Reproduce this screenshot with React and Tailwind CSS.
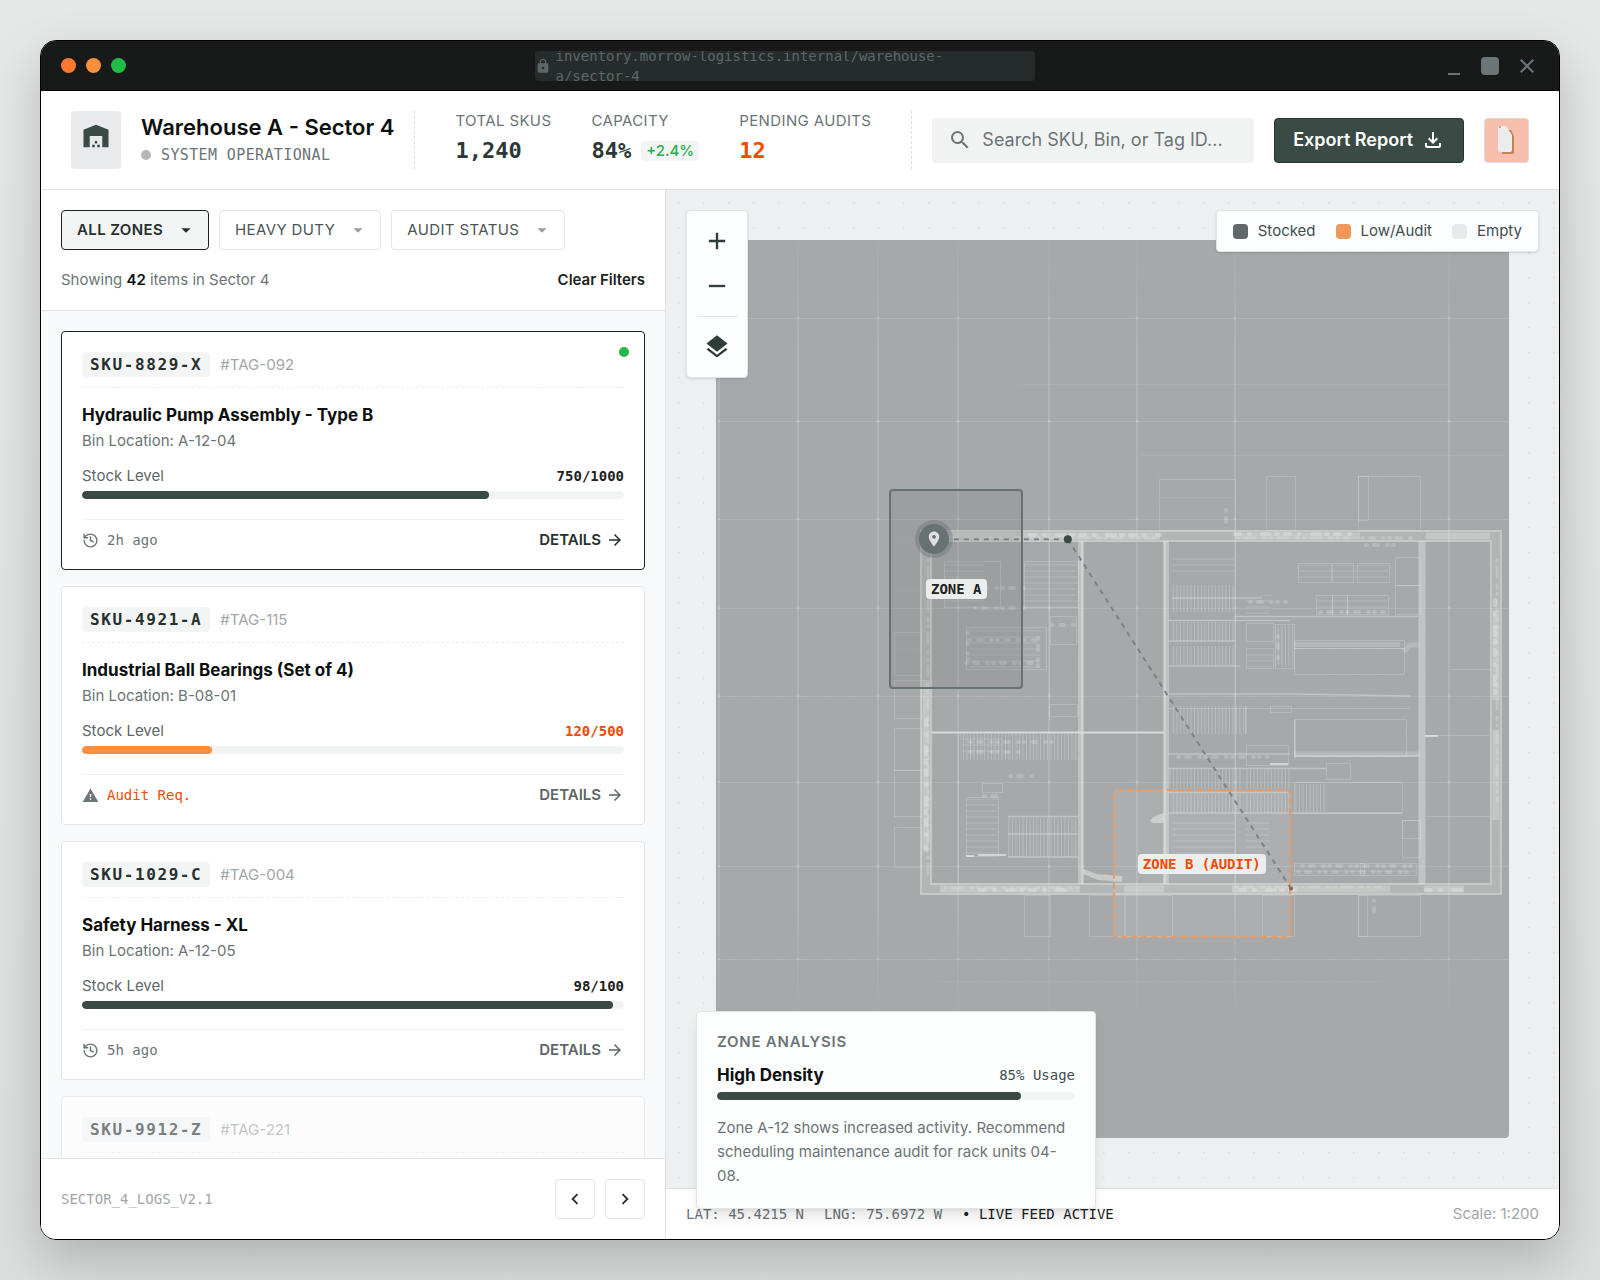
import { useState } from 'react';
import { History } from 'lucide-react';
import {
  MdAdd,
  MdArrowDropDown,
  MdArrowForward,
  MdChevronLeft,
  MdChevronRight,
  MdClose,
  MdLayers,
  MdLocationOn,
  MdLock,
  MdOutlineFileDownload,
  MdRemove,
  MdSearch,
  MdWarehouse,
  MdWarning,
} from 'react-icons/md';

const ITEMS = [
  { sku: 'SKU-8829-X', tag: '#TAG-092', name: 'Hydraulic Pump Assembly - Type B', bin: 'A-12-04', stock: 750, max: 1000, note: '2h ago', selected: true },
  { sku: 'SKU-4921-A', tag: '#TAG-115', name: 'Industrial Ball Bearings (Set of 4)', bin: 'B-08-01', stock: 120, max: 500, note: 'Audit Req.', audit: true },
  { sku: 'SKU-1029-C', tag: '#TAG-004', name: 'Safety Harness - XL', bin: 'A-12-05', stock: 98, max: 100, note: '5h ago' },
  { sku: 'SKU-9912-Z', tag: '#TAG-221', faded: true },
];

const FILTERS = [
  { id: 'zone', label: 'All Zones', active: true },
  { id: 'type', label: 'Heavy Duty' },
  { id: 'audit', label: 'Audit Status' },
];

const LEGEND = [
  { label: 'Stocked', swatch: 'bg-[#5f696c]' },
  { label: 'Low/Audit', swatch: 'bg-[#f0985a]' },
  { label: 'Empty', swatch: 'bg-[#e8e9ea]' },
];

// floor plan geometry, [x, y, width, height]
const DOCKS = [
  [1159, 479, 76, 51], [1266, 476, 29, 54], [1358, 476, 62, 54], [1358, 476, 10, 44],
  [894, 632, 27, 43], [894, 680, 27, 38], [894, 728, 27, 42], [894, 770, 27, 46], [894, 827, 27, 40],
  [1024, 895, 26, 41], [1089, 895, 36, 41], [1124, 895, 48, 41], [1262, 895, 32, 41], [1358, 895, 62, 41], [1358, 895, 9, 41],
];

const ROOMS = [
  [1298, 563, 33, 19], [1332, 563, 21, 19], [1357, 563, 32, 19], [1316, 595, 16, 19], [1332, 595, 15, 19],
  [1347, 595, 41, 19], [1395, 557, 25, 28], [1395, 585, 25, 29], [1246, 623, 27, 18], [1246, 648, 27, 20],
  [1275, 624, 19, 44], [1294, 640, 110, 8], [1294, 648, 110, 26], [1294, 719, 112, 37], [1294, 782, 108, 31],
  [1402, 820, 18, 37], [1402, 820, 18, 18], [1294, 863, 70, 12], [1360, 863, 56, 12], [1246, 745, 42, 20],
  [1326, 763, 24, 16], [1270, 706, 21, 6], [1049, 704, 28, 12], [982, 783, 20, 9], [966, 797, 32, 59],
  [944, 561, 56, 46], [1024, 561, 54, 46], [966, 627, 80, 42], [1050, 616, 26, 28],
];

const RACKS = [
  [1172, 585, 62, 27], [1172, 622, 62, 19], [1172, 646, 62, 19], [1172, 706, 74, 28], [1168, 769, 74, 20],
  [1246, 769, 44, 20], [1172, 794, 70, 19], [1246, 794, 44, 19], [1294, 784, 31, 28], [1008, 818, 70, 16],
  [1008, 835, 70, 22], [960, 734, 118, 26], [1275, 626, 18, 40],
];

const SHELVES = [
  [1172, 555, 62, 20], [1247, 650, 26, 17], [1172, 818, 62, 56], [1246, 818, 24, 34], [966, 799, 32, 56],
  [944, 563, 40, 44], [1024, 561, 54, 50], [970, 630, 70, 38], [962, 734, 40, 20], [1298, 565, 90, 16],
  [1316, 597, 72, 16], [1246, 595, 24, 20], [1294, 865, 122, 10],
];

const GRID_X = [719, 798, 878, 958, 1049, 1137, 1235, 1449];
const GRID_Y = [318, 421, 519, 608, 696, 782, 866, 959];

function FloorPlan() {
  return (
    <svg
      viewBox="716 240 793 898"
      preserveAspectRatio="none"
      className="block h-full w-full rounded bg-[#a7a8aa]"
      aria-hidden="true"
    >
      <defs>
        <pattern id="rack" width="7" height="8" patternUnits="userSpaceOnUse">
          <path d="M1 0v8M4.5 0v8" stroke="#fff" strokeOpacity=".22" />
        </pattern>
        <pattern id="shelf" width="8" height="6" patternUnits="userSpaceOnUse">
          <path d="M0 1h8" stroke="#fff" strokeOpacity=".16" />
        </pattern>
        <linearGradient id="fade" x1="0" y1="0" x2="0" y2="1">
          <stop offset="0" stopColor="#fff" stopOpacity=".02" />
          <stop offset=".15" stopColor="#fff" stopOpacity=".13" />
          <stop offset=".85" stopColor="#fff" stopOpacity=".13" />
          <stop offset="1" stopColor="#fff" stopOpacity="0" />
        </linearGradient>
      </defs>

      {GRID_X.map((x) => (
        <rect key={x} x={x - 1} y="240" width="2" height="780" fill="url(#fade)" />
      ))}
      <g stroke="#fff" strokeOpacity=".12">
        {GRID_Y.map((y) => (
          <path key={y} d={`M718 ${y}.5H1509`} />
        ))}
        <path
          d="M1020 384.5H1449M1140 455.5H1505M1159 497.5H1235M893 539.5h28M893 590.5h28M894 649.5h27M940 981.5H1380"
          strokeOpacity=".07"
        />
      </g>
      <g fill="#fff" fillOpacity=".14">
        {GRID_X.map((x) => GRID_Y.map((y) => <circle key={`${x}-${y}`} cx={x} cy={y} r="1.5" />))}
      </g>

      <g fill="none" stroke="#fff" strokeOpacity=".16">
        {DOCKS.map(([x, y, w, h], i) => (
          <rect key={i} x={x + 0.5} y={y + 0.5} width={w} height={h} />
        ))}
      </g>
      {RACKS.map(([x, y, w, h], i) => (
        <rect key={i} x={x} y={y} width={w} height={h} fill="url(#rack)" />
      ))}
      {SHELVES.map(([x, y, w, h], i) => (
        <rect key={i} x={x} y={y} width={w} height={h} fill="url(#shelf)" />
      ))}
      <g fill="none" stroke="#fff" strokeOpacity=".18">
        {ROOMS.map(([x, y, w, h], i) => (
          <rect key={i} x={x + 0.5} y={y + 0.5} width={w} height={h} />
        ))}
        <path d="M1235.5 541V884M1449.5 669.5H1490M1425 735.5h65M1425 816.5h65M1168 708.5H1410M958.5 734V884M1049.5 541V720" />
      </g>
      <g fill="none" stroke="#fff" strokeOpacity=".3" strokeWidth="1.5">
        <path d="M1168 620.5H1290M1168 641H1235M1168 666H1240M1235 616.5H1418M1168 694H1294l116 2M1168 754H1290M1168 768.5H1326M1168 792.5H1290M1168 813H1402M1294 756H1420M1172 598h90M1008 834h70M1008 816.5h70M1008 857h70M1295 720v38M1246 706v28" />
      </g>
      <path d="M1294 644.5H1400M1294 754H1420M1404 652l6-7h10" fill="none" stroke="#fff" strokeOpacity=".18" strokeWidth="5" />
      {/* loose equipment */}
      <g stroke="#fff" strokeOpacity=".18" strokeWidth="4" strokeLinecap="round" strokeDasharray="1 7 4 9 1 5">
        <path d="M970 640h70M966 663h72M975 608h54M1038 638v28M1052 625h24M970 742h84M970 752h50M1010 776h26M984 796h20M975 588h50M1178 757h90M1298 872h116M1302 866h110M1362 538h52M1366 545h30M1250 602h36M1320 612h64M1278 636v26M1226 510v18M1374 900v12M968 632v32" />
      </g>
      <path d="M966 856h8M978 855h28M1270 764h18M1425 736h13" stroke="#fff" strokeOpacity=".5" strokeWidth="2" />

      {/* outer walls */}
      <g fill="none" stroke="#e3e6e4">
        <rect x="926" y="536" width="570" height="353" strokeOpacity=".22" strokeWidth="12" />
        <rect x="921" y="531" width="580" height="363" strokeOpacity=".4" strokeWidth="2" />
        <rect x="931" y="541" width="560" height="343" strokeOpacity=".4" strokeWidth="2" />
        <path
          d="M940 536H1160M1235 536H1360M1426 536H1490M926 680V850M1496 610V700M1496 730V820M940 889H1080M1124 889H1164M1232 889H1390M1424 889H1464"
          strokeOpacity=".36"
          strokeWidth="7"
        />
        <path
          d="M1030 535H1160M1235 534H1350M926 720V850M1495 600V700M980 890H1070M1240 890H1300M1426 890h36"
          strokeOpacity=".42"
          strokeWidth="4"
          strokeLinecap="round"
          strokeDasharray="5 9 1 12 8 6 2 7"
        />
        <path
          d="M940 538H1158M1238 538H1350M928 560V880M1497 560V800M945 888H1080M1236 887H1380"
          strokeOpacity=".26"
          strokeWidth="3"
          strokeLinecap="round"
          strokeDasharray="1 6 10 8 3 5"
        />
      </g>
      {/* partitions */}
      <g fill="none" stroke="#e3e6e4">
        <path d="M1081 541V884M1166 541V884" strokeOpacity=".42" strokeWidth="6" />
        <path d="M1082 541V884M1165 541V884" strokeOpacity=".45" strokeWidth="2" />
        <path d="M1422 541V884" strokeOpacity=".45" strokeWidth="7" />
        <path d="M932 732.5H1164" strokeOpacity=".8" strokeWidth="2" />
      </g>
      <g fill="#e3e6e4" fillOpacity=".55">
        <path d="M1083 869l14 5 25 2v6l-24-2-15-6zM1150 820l7-5 7-2v10h-12z" />
      </g>
    </svg>
  );
}

function TitleBar() {
  return (
    <div className="flex h-[50px] shrink-0 items-center justify-between border-b border-black bg-[#181a19] px-5">
      <div className="flex gap-[10px]">
        <span className="h-[15px] w-[15px] rounded-full bg-[#ff7a2c]" />
        <span className="h-[15px] w-[15px] rounded-full bg-[#fc8f3c]" />
        <span className="h-[15px] w-[15px] rounded-full bg-[#21bb48]" />
      </div>
      <div className="flex h-[30px] w-[500px] items-center gap-[5px] overflow-hidden rounded bg-[#262c2c] font-['DejaVu_Sans_Mono',monospace] text-[14px] leading-5 text-[#5d6769]">
        <MdLock className="shrink-0" size={16} />
        <span className="w-[430px] break-words">inventory.morrow-logistics.internal/warehouse-a/sector-4</span>
      </div>
      <div className="flex items-center gap-4 text-[#6b7577]">
        <button type="button" aria-label="Minimize" className="flex h-[18px] w-[22px] items-end justify-center">
          <span className="h-[2px] w-3 bg-current" />
        </button>
        <button type="button" aria-label="Maximize" className="h-[18px] w-[18px] rounded-sm bg-current" />
        <button type="button" aria-label="Close">
          <MdClose size={24} />
        </button>
      </div>
    </div>
  );
}

function Stat({ label, children }) {
  return (
    <div className="flex flex-col justify-between whitespace-nowrap">
      <span className="text-[15px] leading-5 tracking-wide text-[#6b7476] uppercase">{label}</span>
      <div className="flex items-center gap-[10px] font-['DejaVu_Sans_Mono',monospace] text-[22px] leading-9 font-bold text-[#2c3835]">
        {children}
      </div>
    </div>
  );
}

function Header() {
  return (
    <header className="flex shrink-0 items-stretch border-b border-[#dfe1e2] bg-white px-[30px] py-5">
      <div className="flex items-stretch gap-5 border-r border-dashed border-[#dcdedf] pr-5">
        <div className="flex w-[50px] justify-center rounded bg-[#e9eaec] pt-[10px] text-[#3a4a44]">
          <MdWarehouse size={30} />
        </div>
        <div className="flex flex-col gap-[2px] whitespace-nowrap">
          <h1 className="text-[22px] leading-8 font-semibold text-[#0c0f0e]">Warehouse A - Sector 4</h1>
          <p className="flex items-center gap-[10px] font-['DejaVu_Sans_Mono',monospace] text-[15px] leading-5 tracking-wide text-[#6b7476]">
            <span className="h-[10px] w-[10px] rounded-full bg-[#b5b7b7]" />
            SYSTEM OPERATIONAL
          </p>
        </div>
      </div>

      <div className="flex gap-10 border-r border-dashed border-[#dcdedf] px-10">
        <Stat label="Total SKUs">1,240</Stat>
        <Stat label="Capacity">
          84%
          <span className="rounded bg-[#f3f5f5] px-[5px] font-['Inter',sans-serif] text-[15px] leading-5 font-medium text-[#22b14c]">+2.4%</span>
        </Stat>
        <Stat label="Pending Audits">
          <span className="text-[#f04b00]">12</span>
        </Stat>
      </div>

      <div className="flex h-[58px] min-w-0 flex-1 items-center gap-5 pl-5">
        <label className="flex h-[45px] min-w-0 flex-1 items-center gap-[10px] rounded bg-[#f1f3f3] px-4 text-[#6b7476]">
          <MdSearch size={24} className="shrink-0" />
          <span className="sr-only">Search inventory</span>
          <input
            type="text"
            placeholder="Search SKU, Bin, or Tag ID..."
            className="w-full min-w-0 bg-transparent text-[18px] leading-6 outline-none placeholder:text-[#6b7476]"
          />
        </label>
        <button
          type="button"
          className="flex h-[45px] shrink-0 items-center gap-2 rounded border border-[#2a3531] bg-[#3a4a44] px-[18px] text-[18px] leading-6 font-semibold text-white"
        >
          Export Report
          <MdOutlineFileDownload size={24} />
        </button>
        <button
          type="button"
          aria-label="Account"
          className="flex h-[45px] w-[45px] shrink-0 items-center justify-center rounded border border-[#dadcdc] bg-[#f5bfac]"
        >
          <svg width="20" height="30" viewBox="0 0 20 30" aria-hidden="true">
            <path d="M5 5h9l3 6v16q0 2-2 2H5z" fill="#c4805c" />
            <path d="M1 3q0-2 2-2h6l6 9v15q0 2-2 2H3q-2 0-2-2z" fill="#ececed" />
            <path d="M2 2h2" stroke="#777" />
          </svg>
        </button>
      </div>
    </header>
  );
}

function ItemDetails({ item }) {
  const pct = Math.round((item.stock / item.max) * 100);

  return (
    <>
      <h3 className="mt-[15px] text-[17px] leading-6 font-bold text-[#0c0f0e]">{item.name}</h3>
      <p className="mt-[3px] text-[15px] leading-[22px] text-[#6b7476]">Bin Location: {item.bin}</p>

      <div className="mt-[13px] flex items-center justify-between text-[15px] leading-[22px]">
        <span className="text-[#5d6668]">Stock Level</span>
        <span className={`font-['DejaVu_Sans_Mono',monospace] text-[14px] font-bold ${item.audit ? 'text-[#f04b00]' : 'text-[#1c2220]'}`}>
          {item.stock}/{item.max}
        </span>
      </div>
      <div className="mt-1 h-2 overflow-hidden rounded-full bg-[#f2f4f4]">
        <div className={`h-full rounded-full ${item.audit ? 'bg-[#fc8f3c]' : 'bg-[#3a4a44]'}`} style={{ width: `${pct}%` }} />
      </div>

      <div className="mt-5 flex items-center justify-between border-t border-[#f0f2f2] pt-[10px] text-[15px] leading-5">
        <span className="flex items-center gap-2 font-['DejaVu_Sans_Mono',monospace] text-[14px] text-[#6b7476]">
          {item.audit ? <MdWarning size={17} /> : <History size={17} />}
          <span className={item.audit ? 'text-[#f04b00]' : ''}>{item.note}</span>
        </span>
        <button type="button" className={`flex items-center gap-[5px] font-semibold ${item.selected ? 'text-[#27302d]' : 'text-[#5d6668]'}`}>
          DETAILS
          <MdArrowForward size={18} />
        </button>
      </div>
    </>
  );
}

function ItemCard({ item }) {
  return (
    <article
      className={`relative shrink-0 rounded border bg-white px-5 pt-5 pb-[19px] ${
        item.selected ? 'border-[#1c2220]' : 'border-[#e2e4e5]'
      } ${item.faded ? 'opacity-60' : ''}`}
    >
      {item.selected && <span className="absolute top-[15px] right-[15px] h-[10px] w-[10px] rounded-full bg-[#21bb48]" />}

      <div className="flex items-center gap-[10px] border-b border-dashed border-[#eceeee] pb-[10px]">
        <span className="rounded bg-[#f3f5f5] px-2 font-['DejaVu_Sans_Mono',monospace] text-[16px] leading-[25px] font-bold tracking-widest text-[#27302d]">
          {item.sku}
        </span>
        <span className="text-[15px] leading-5 text-[#a2a6a8]">{item.tag}</span>
      </div>

      {item.name && <ItemDetails item={item} />}
    </article>
  );
}

function Sidebar() {
  return (
    <aside className="flex min-h-0 flex-col border-r border-[#dfe1e2] bg-[#f8f9fb]">
      <div className="border-b border-[#dfe1e2] bg-white p-5">
        <div className="flex gap-[10px]">
          {FILTERS.map((f) => (
            <div key={f.id} className="relative">
              <label htmlFor={f.id} className="sr-only">{f.label}</label>
              <select
                id={f.id}
                className={`h-10 appearance-none rounded border field-sizing-content pr-[45px] pl-[15px] text-[15px] leading-5 tracking-wide uppercase ${
                  f.active
                    ? 'border-[#1c2220] bg-[#f3f5f5] font-semibold text-[#27302d]'
                    : 'border-[#e2e4e5] bg-white text-[#4a5456]'
                }`}
              >
                <option>{f.label}</option>
              </select>
              <MdArrowDropDown
                size={22}
                className={`pointer-events-none absolute top-[9px] right-3 ${f.active ? 'text-[#27302d]' : 'text-[#9a9ea0]'}`}
              />
            </div>
          ))}
        </div>
        <div className="mt-5 flex items-center justify-between text-[15px] leading-5">
          <p className="text-[#6b7476]">
            Showing <strong className="font-semibold text-[#0c0f0e]">42</strong> items in Sector 4
          </p>
          <button type="button" className="font-semibold text-[#1c2220]">Clear Filters</button>
        </div>
      </div>

      <div className="flex min-h-0 flex-1 flex-col gap-4 overflow-y-auto p-5 [scrollbar-width:none]">
        {ITEMS.map((item) => (
          <ItemCard key={item.sku} item={item} />
        ))}
      </div>

      <div className="flex shrink-0 items-center justify-between border-t border-[#e2e4e5] bg-white p-5">
        <span className="font-['DejaVu_Sans_Mono',monospace] text-[14px] leading-5 text-[#a2a6a8]">SECTOR_4_LOGS_V2.1</span>
        <div className="flex gap-[10px] text-[#27302d]">
          <button type="button" aria-label="Previous page" className="flex h-10 w-10 items-center justify-center rounded border border-[#e2e4e5]">
            <MdChevronLeft size={22} />
          </button>
          <button type="button" aria-label="Next page" className="flex h-10 w-10 items-center justify-center rounded border border-[#e2e4e5]">
            <MdChevronRight size={22} />
          </button>
        </div>
      </div>
    </aside>
  );
}

function MapView() {
  const [showPlan, setShowPlan] = useState(true);

  return (
    <div className="relative min-h-0 flex-1 bg-[#edeff1] p-[50px]">
      {showPlan && <FloorPlan />}
      <div className="pointer-events-none absolute inset-0 bg-[radial-gradient(#8d949722_1px,transparent_1px)] bg-[size:25px_25px]" />

      <div className="absolute top-[30%] left-[25%] flex h-[20%] w-[15%] items-center justify-center rounded border-2 border-[#677174] bg-[#3a4a441a]">
        <span className="rounded bg-[#eceded] px-[5px] font-['DejaVu_Sans_Mono',monospace] text-[14px] leading-5 font-bold text-[#1c2220]">
          ZONE A
        </span>
      </div>
      <div className="absolute top-[60%] left-1/2 flex h-[15%] w-[20%] items-center justify-center rounded border-2 border-dashed border-[#e79c68] bg-[#ffffff14]">
        <span className="rounded bg-[#eceded] px-[5px] font-['DejaVu_Sans_Mono',monospace] text-[14px] leading-5 font-bold whitespace-nowrap text-[#f04b00]">
          ZONE B (AUDIT)
        </span>
      </div>

      {/* pick route */}
      <svg className="pointer-events-none absolute inset-0 h-full w-full" aria-hidden="true">
        <line x1="30%" y1="35%" x2="45%" y2="35%" stroke="#7b8386" strokeWidth="2" strokeDasharray="5 5" />
        <line x1="45%" y1="35%" x2="70%" y2="70%" stroke="#7b8386" strokeWidth="2" strokeDasharray="5 5" />
        <circle cx="45%" cy="35%" r="4" fill="#3a4a44" />
        <circle cx="70%" cy="70%" r="2" fill="#8a6450" />
      </svg>
      <div className="absolute top-[35%] left-[30%] flex h-[30px] w-[30px] -translate-x-1/2 -translate-y-1/2 items-center justify-center rounded-full bg-[#687275] text-[#dfe0e0] ring-4 ring-[#68727566]">
        <MdLocationOn size={18} />
      </div>

      <div className="absolute top-5 left-5 flex flex-col items-center gap-[5px] rounded border border-[#e2e4e5] bg-[#fcfdfe] p-[10px] text-[#2f3c38] shadow-sm">
        <button type="button" aria-label="Zoom in" className="flex h-10 w-10 items-center justify-center">
          <MdAdd size={28} />
        </button>
        <button type="button" aria-label="Zoom out" className="flex h-10 w-10 items-center justify-center">
          <MdRemove size={28} />
        </button>
        <hr className="my-[5px] w-10 border-[#e2e4e5]" />
        <button
          type="button"
          aria-label="Toggle floor plan"
          className="flex h-10 w-10 items-center justify-center"
          onClick={() => setShowPlan(!showPlan)}
        >
          <MdLayers size={28} />
        </button>
      </div>

      <ul className="absolute top-5 right-5 flex gap-5 rounded border border-[#e2e4e5] bg-[#fcfdfe] px-4 py-[10px] text-[15px] leading-5 text-[#434d4f] shadow-sm">
        {LEGEND.map((l) => (
          <li key={l.label} className="flex items-center gap-[10px]">
            <span className={`h-[15px] w-[15px] rounded-sm ${l.swatch}`} />
            {l.label}
          </li>
        ))}
      </ul>
    </div>
  );
}

function ZoneAnalysis() {
  return (
    <section className="absolute bottom-[30px] left-[30px] w-[400px] rounded border border-[#e2e4e5] bg-[#fcfdfd] p-5 shadow-lg">
      <h2 className="text-[15px] leading-5 font-semibold tracking-wider text-[#6b7476] uppercase">Zone Analysis</h2>
      <div className="mt-[11px] flex items-center justify-between leading-6">
        <h3 className="text-[17px] font-bold text-[#0c0f0e]">High Density</h3>
        <span className="font-['DejaVu_Sans_Mono',monospace] text-[14px] text-[#434d4f]">85% Usage</span>
      </div>
      <div className="mt-[5px] h-2 overflow-hidden rounded-full bg-[#f2f4f4]">
        <div className="h-full w-[85%] rounded-full bg-[#3a4a44]" />
      </div>
      <p className="mt-4 text-[15px] leading-6 text-[#6b7476]">
        Zone A-12 shows increased activity. Recommend scheduling maintenance audit for rack units 04-08.
      </p>
    </section>
  );
}

export default function App() {
  return (
    <div className="h-screen bg-gradient-to-b from-[#e6e7e7] to-[#dcdddd] p-10 font-['Inter',sans-serif]">
      <div className="flex h-full flex-col overflow-hidden rounded-2xl border border-black bg-white shadow-[0_20px_50px_rgba(0,0,0,0.2)]">
        <TitleBar />
        <Header />
        <main className="grid min-h-0 flex-1 grid-cols-[0.7fr_1fr]">
          <Sidebar />
          <section className="relative flex min-h-0 min-w-0 flex-col">
            <MapView />
            <div className="flex h-[51px] shrink-0 items-center justify-between border-t border-[#dfe1e2] bg-white px-5 text-[15px] leading-5">
              <div className="flex gap-5 font-['DejaVu_Sans_Mono',monospace] text-[14px] whitespace-nowrap text-[#6b7476]">
                <span>LAT: 45.4215 N</span>
                <span>LNG: 75.6972 W</span>
                <span className="text-[#1c2220]">• LIVE FEED ACTIVE</span>
              </div>
              <span className="text-[#a2a6a8]">Scale: 1:200</span>
            </div>
            <ZoneAnalysis />
          </section>
        </main>
      </div>
    </div>
  );
}
